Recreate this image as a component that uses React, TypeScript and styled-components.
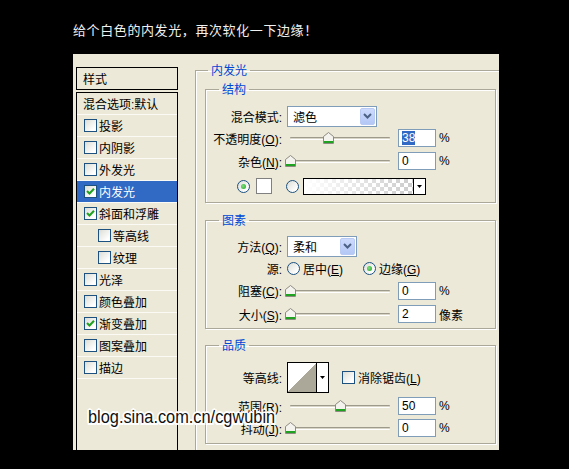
import React from 'react';
import styled, { createGlobalStyle } from 'styled-components';

const UI_FONT = `"Liberation Sans", "Noto Sans CJK SC", sans-serif`;

const GlobalStyle = createGlobalStyle`
  html, body { margin: 0; padding: 0; background: #000; }
  body { font-family: ${UI_FONT}; }
`;

const Page = styled.div`
  position: relative;
  width: 569px;
  height: 469px;
  background: #000;
  overflow: hidden;
  display: flex;
  flex-direction: column;
`;

const Title = styled.div`
  padding: 22px 0 0 73px;
  height: 16px;
  line-height: 16px;
  font-family: "Noto Sans CJK SC", sans-serif;
  font-size: 13px;
  letter-spacing: 0.6px;
  color: #f0f0f0;
  white-space: nowrap;
`;

const Dialog = styled.div`
  margin: 16px 0 0 73px;
  width: 426px;
  height: 396px;
  box-sizing: border-box;
  padding: 9px 0 0 3px;
  background: #ece9d8;
  display: flex;
  align-items: flex-start;
  overflow: hidden;
  font-family: ${UI_FONT};
  font-size: 12px;
  color: #000;
`;

/* ---------- left: styles list ---------- */

const StyleColumn = styled.div`
  width: 102px;
  flex: none;
  margin-top: 4px;
  display: flex;
  flex-direction: column;
  gap: 2px;
`;

const StyleHeader = styled.div`
  height: 23px;
  box-sizing: border-box;
  border: 1px solid #000;
  padding-left: 6px;
  display: flex;
  align-items: center;
`;

const StyleList = styled.div`
  height: 400px;
  box-sizing: border-box;
  border: 1px solid #000;
  display: flex;
  flex-direction: column;
`;

const ListRow = styled.div<{ $selected?: boolean; $pad: number }>`
  height: 22px;
  flex: none;
  box-sizing: border-box;
  border-bottom: 1px solid #fbfaf4;
  display: flex;
  align-items: center;
  gap: 2px;
  padding-left: ${p => p.$pad}px;
  background: ${p => (p.$selected ? '#316ac5' : 'transparent')};
  color: ${p => (p.$selected ? '#fff' : '#000')};
  white-space: nowrap;
`;

const CheckBox = styled.span`
  width: 13px;
  height: 13px;
  flex: none;
  box-sizing: border-box;
  border: 1px solid #1c5180;
  background: linear-gradient(135deg, #dcdcd6, #ffffff 80%);
  display: inline-flex;
  align-items: center;
  justify-content: center;
`;

const Check: React.FC<{ checked?: boolean }> = ({ checked }) => (
  <CheckBox>
    {checked && (
      <svg width="9" height="9" viewBox="0 0 9 9">
        <path d="M1 4 L3.5 6.5 L8 1.8" fill="none" stroke="#21a121" strokeWidth="2" />
      </svg>
    )}
  </CheckBox>
);

/* ---------- right: group boxes ---------- */

const OuterGroup = styled.fieldset`
  margin: 0 0 0 17px;
  padding: 5px 0 0 9px;
  width: 330px;
  height: 420px;
  flex: none;
  min-width: 0;
  border: 1px solid #aca899;
  box-shadow: inset 1px 1px 0 #fff;
`;

const Legend = styled.legend<{ $offset: number }>`
  margin-left: ${p => p.$offset}px;
  padding: 0 3px;
  line-height: 14px;
  font-size: 12px;
  color: #0046d5;
  font-family: "Noto Sans CJK SC", sans-serif;
`;

const Group = styled.fieldset<{ $top: number; $bottom: number; $gap: number }>`
  margin: 0 0 ${p => p.$gap}px 0;
  padding: ${p => p.$top}px 0 ${p => p.$bottom}px 0;
  width: 291px;
  box-sizing: border-box;
  min-width: 0;
  border: 1px solid #aca899;
  box-shadow: inset 1px 1px 0 #fff, 1px 1px 0 #fff;
`;

const Row = styled.div<{ $h: number; $indent?: number }>`
  height: ${p => p.$h}px;
  display: flex;
  align-items: center;
  padding-left: ${p => p.$indent ?? 0}px;
  white-space: nowrap;
`;

const Label = styled.span`
  width: 76px;
  flex: none;
  margin-right: 5px;
  text-align: right;
`;

const SelectBox = styled.div<{ $w: number }>`
  width: ${p => p.$w}px;
  height: 21px;
  box-sizing: border-box;
  border: 1px solid #7f9db9;
  background: #fff;
  display: flex;
  align-items: center;
  justify-content: space-between;
  padding: 1px 1px 1px 5px;
  flex: none;
`;

const ComboButton = styled.span`
  width: 15px;
  height: 17px;
  box-sizing: border-box;
  border: 1px solid #b9cbf5;
  border-radius: 2px;
  background: linear-gradient(#cddafd, #b4c8f6);
  display: flex;
  align-items: center;
  justify-content: center;
`;

const Select: React.FC<{ w: number; value: string }> = ({ w, value }) => (
  <SelectBox $w={w}>
    <span>{value}</span>
    <ComboButton>
      <svg width="9" height="6" viewBox="0 0 9 6">
        <path d="M1 1 L4.5 4.5 L8 1" fill="none" stroke="#4d6185" strokeWidth="2" />
      </svg>
    </ComboButton>
  </SelectBox>
);

const SliderWrap = styled.div`
  position: relative;
  width: 100px;
  height: 14px;
  margin-left: 3px;
  flex: none;
`;

const Track = styled.div`
  position: absolute;
  left: 0;
  right: 0;
  top: 6px;
  height: 3px;
  box-sizing: border-box;
  border-top: 1px solid #9d9a8c;
  border-bottom: 1px solid #fff;
  background: #d8d5c6;
  border-radius: 1px;
`;

const Thumb = styled.svg`
  position: absolute;
  top: 1px;
`;

const Slider: React.FC<{ value: number }> = ({ value }) => (
  <SliderWrap>
    <Track />
    <Thumb width="11" height="12" viewBox="0 0 11 12" style={{ left: value - 5 }}>
      <path d="M5.5 0.5 L10.5 4.5 V11.5 H0.5 V4.5 Z" fill="#f4f3ee" stroke="#8c8a80" />
      <rect x="1" y="9" width="9" height="2" fill="#21a121" />
    </Thumb>
  </SliderWrap>
);

const NumBox = styled.div`
  width: 38px;
  height: 18px;
  box-sizing: border-box;
  margin-left: 8px;
  border: 1px solid #7f9db9;
  background: #fff;
  padding-left: 3px;
  display: flex;
  align-items: center;
  flex: none;
`;

const Highlight = styled.span`
  background: #316ac5;
  color: #fff;
`;

const Unit = styled.span`
  margin-left: 3px;
`;

const RadioDot = styled.span<{ $on?: boolean }>`
  width: 13px;
  height: 13px;
  flex: none;
  box-sizing: border-box;
  border: 1px solid #1c5180;
  border-radius: 50%;
  background: linear-gradient(135deg, #dcdcd6, #ffffff 80%);
  display: inline-flex;
  align-items: center;
  justify-content: center;

  &::after {
    content: '';
    width: 5px;
    height: 5px;
    border-radius: 50%;
    background: ${p => (p.$on ? 'radial-gradient(circle at 40% 40%, #7ee07e, #21a121)' : 'transparent')};
  }
`;

const RadioOption = styled.span<{ $w?: number }>`
  display: inline-flex;
  align-items: center;
  gap: 3px;
  width: ${p => (p.$w ? `${p.$w}px` : 'auto')};
  flex: none;
`;

const Swatch = styled.span`
  width: 16px;
  height: 16px;
  box-sizing: border-box;
  margin: 0 14px 0 6px;
  border: 1px solid #808080;
  background: #fff;
  flex: none;
`;

const GradientPicker = styled.div`
  width: 123px;
  height: 17px;
  margin-left: 4px;
  box-sizing: border-box;
  border: 1px solid #000;
  display: flex;
  flex: none;
`;

const GradientFill = styled.span`
  flex: 1;
  background: linear-gradient(to right, #fff 0%, rgba(255, 255, 255, 0) 100%),
    repeating-conic-gradient(#cccccc 0 25%, #ffffff 0 50%) 0 0 / 8px 8px;
`;

const ArrowPart = styled.span`
  width: 11px;
  border-left: 1px solid #000;
  background: #fff;
  display: flex;
  align-items: center;
  justify-content: center;
  flex: none;
`;

const SmallArrow = () => (
  <svg width="5" height="3" viewBox="0 0 5 3">
    <path d="M0 0 H5 L2.5 3 Z" fill="#000" />
  </svg>
);

const ContourBox = styled.div`
  width: 42px;
  height: 31px;
  box-sizing: border-box;
  border: 1px solid #000;
  display: flex;
  flex: none;
`;

const ContourPreview = styled.span`
  flex: 1;
  background: linear-gradient(to top left, #aca899 50%, #fff 50%);
`;

const AntiAlias = styled.span`
  margin-left: 13px;
  display: inline-flex;
  align-items: center;
  gap: 3px;
`;

const Watermark = styled.div`
  position: absolute;
  left: 88px;
  top: 407px;
  font-family: "Liberation Sans", sans-serif;
  font-size: 19px;
  line-height: 19px;
  color: #111;
  white-space: nowrap;
  transform: scaleX(0.86);
  transform-origin: left center;
  text-shadow: -2px 0 0 #fff, 2px 0 0 #fff, 0 -2px 0 #fff, 0 2px 0 #fff,
    -1.5px -1.5px 0 #fff, 1.5px -1.5px 0 #fff, -1.5px 1.5px 0 #fff, 1.5px 1.5px 0 #fff;
`;

const styleItems: { name: string; checked?: boolean; selected?: boolean; indent?: boolean }[] = [
  { name: '投影' },
  { name: '内阴影' },
  { name: '外发光' },
  { name: '内发光', checked: true, selected: true },
  { name: '斜面和浮雕', checked: true },
  { name: '等高线', indent: true },
  { name: '纹理', indent: true },
  { name: '光泽' },
  { name: '颜色叠加' },
  { name: '渐变叠加', checked: true },
  { name: '图案叠加' },
  { name: '描边' },
];

const SliderRow: React.FC<{ h: number; label: React.ReactNode; value: number; text: React.ReactNode; unit: string }> = ({
  h,
  label,
  value,
  text,
  unit,
}) => (
  <Row $h={h}>
    <Label>{label}</Label>
    <Slider value={value} />
    <NumBox>{text}</NumBox>
    <Unit>{unit}</Unit>
  </Row>
);

export default function App() {
  return (
    <Page>
      <GlobalStyle />
      <Title>给个白色的内发光，再次软化一下边缘！</Title>
      <Dialog>
        <StyleColumn>
          <StyleHeader>样式</StyleHeader>
          <StyleList>
            <ListRow $pad={6}>混合选项:默认</ListRow>
            {styleItems.map(item => (
              <ListRow key={item.name} $pad={item.indent ? 21 : 7} $selected={item.selected}>
                <Check checked={item.checked} />
                {item.name}
              </ListRow>
            ))}
          </StyleList>
        </StyleColumn>

        <OuterGroup>
          <Legend $offset={3}>内发光</Legend>

          <Group $top={9} $bottom={3} $gap={10}>
            <Legend $offset={13}>结构</Legend>
            <Row $h={22}>
              <Label>混合模式:</Label>
              <Select w={90} value="滤色" />
            </Row>
            <SliderRow
              h={22}
              label={<>不透明度(<u>O</u>):</>}
              value={38}
              text={<Highlight>38</Highlight>}
              unit="%"
            />
            <SliderRow h={24} label={<>杂色(<u>N</u>):</>} value={0} text="0" unit="%" />
            <Row $h={26} $indent={31}>
              <RadioDot $on />
              <Swatch />
              <RadioDot />
              <GradientPicker>
                <GradientFill />
                <ArrowPart>
                  <SmallArrow />
                </ArrowPart>
              </GradientPicker>
            </Row>
          </Group>

          <Group $top={8} $bottom={2} $gap={9}>
            <Legend $offset={13}>图素</Legend>
            <Row $h={22}>
              <Label>方法(<u>Q</u>):</Label>
              <Select w={70} value="柔和" />
            </Row>
            <Row $h={22}>
              <Label>源:</Label>
              <RadioOption $w={76}>
                <RadioDot />
                <span>居中(<u>E</u>)</span>
              </RadioOption>
              <RadioOption>
                <RadioDot $on />
                <span>边缘(<u>G</u>)</span>
              </RadioOption>
            </Row>
            <SliderRow h={23} label={<>阻塞(<u>C</u>):</>} value={0} text="0" unit="%" />
            <SliderRow h={24} label={<>大小(<u>S</u>):</>} value={0} text="2" unit="像素" />
          </Group>

          <Group $top={7} $bottom={4} $gap={0}>
            <Legend $offset={13}>品质</Legend>
            <Row $h={36}>
              <Label>等高线:</Label>
              <ContourBox>
                <ContourPreview />
                <ArrowPart>
                  <SmallArrow />
                </ArrowPart>
              </ContourBox>
              <AntiAlias>
                <Check />
                <span>消除锯齿(<u>L</u>)</span>
              </AntiAlias>
            </Row>
            <SliderRow h={22} label={<>范围(<u>R</u>):</>} value={50} text="50" unit="%" />
            <SliderRow h={22} label={<>抖动(<u>J</u>):</>} value={0} text="0" unit="%" />
          </Group>
        </OuterGroup>
      </Dialog>
      <Watermark>blog.sina.com.cn/cgwubin</Watermark>
    </Page>
  );
}
